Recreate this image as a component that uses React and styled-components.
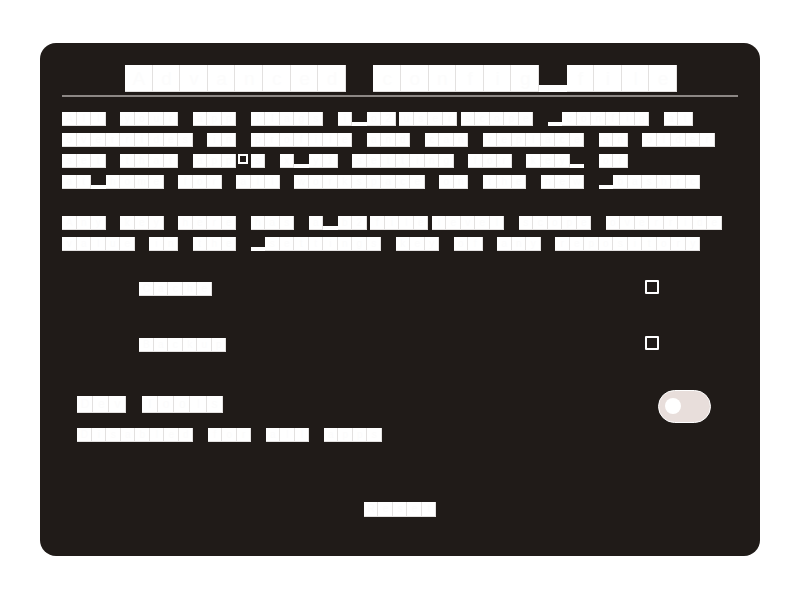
import React from 'react'
import styled, { createGlobalStyle, css } from 'styled-components'

const SIZES = {
  title: { w: 27.6, h: 27 },
  heading: { w: 16.2, h: 17 },
  body: { w: 14.5, h: 14.4 },
}

function Glyphs({ children, size = 'body' }) {
  const s = SIZES[size]
  return (
    <Run $h={s.h}>
      {[...children].map((ch, i) => {
        if (ch === ' ') return <Gap key={i} $w={s.w} $h={s.h}> </Gap>
        if (ch === '-') return <Gap key={i} $w={3.5} $h={s.h}>-</Gap>
        const kind = ch === '_' ? 'low' : ch === "'" ? 'quote' : 'full'
        return (
          <Cell key={i} $w={s.w} $h={s.h} $kind={kind}>
            {ch}
          </Cell>
        )
      })}
    </Run>
  )
}

const intro = [
  'All your app flags i_o2-user-scope _config at',
  'overrides in profile and can replace an older',
  "set that app's x_y1 setting for key_ of",
  'at_home for all workspace on the new _bashrc',
]

const scope = [
  'Any key here has a_b2-file-level scope override',
  'value in the _settings key of any repository',
]

function App() {
  return (
    <>
      <GlobalStyle />
      <Card>
        <Title>
          <Glyphs size="title">Advanced config_file</Glyphs>
        </Title>
        <Rule />

        <Paragraph>
          {intro.map((line) => (
            <Glyphs key={line}>{line}</Glyphs>
          ))}
        </Paragraph>

        <Paragraph $gap={27}>
          {scope.map((line) => (
            <Glyphs key={line}>{line}</Glyphs>
          ))}
        </Paragraph>

        <Options>
          <CheckRow>
            <CheckLabel>
              <Glyphs>Cache</Glyphs>
            </CheckLabel>
            <Checkbox type="checkbox" aria-label="Cache" />
          </CheckRow>
          <CheckRow>
            <CheckLabel>
              <Glyphs>Backup</Glyphs>
            </CheckLabel>
            <Checkbox type="checkbox" aria-label="Backup" />
          </CheckRow>
        </Options>

        <ToggleRow>
          <ToggleText>
            <Glyphs size="heading">Dev Tools</Glyphs>
            <Glyphs>Disabled for all apps</Glyphs>
          </ToggleText>
          <Switch role="switch" aria-checked="false">
            <Knob />
          </Switch>
        </ToggleRow>

        <Footer>
          <ResetButton>
            <Glyphs>Reset</Glyphs>
          </ResetButton>
        </Footer>
      </Card>
    </>
  )
}

export default App

const GlobalStyle = createGlobalStyle`
    body {
        margin: 0;
        background: #ffffff;
        font-family: "Liberation Sans", Arial, sans-serif;
    }
    #root {
        padding: 43px 40px;
    }
`

const Card = styled.div`
    width: 720px;
    box-sizing: border-box;
    background: #201b18;
    border-radius: 16px;
    padding: 22px 22px 39px;
    display: flex;
    flex-direction: column;
`

const Run = styled.div`
    display: flex;
    align-items: flex-start;
    height: ${({ $h }) => $h}px;
`

const Gap = styled.span`
    flex: none;
    display: block;
    width: ${({ $w }) => $w}px;
    height: ${({ $h }) => $h}px;
    overflow: hidden;
    color: transparent;
    font: ${({ $h }) => Math.round($h * 0.7)}px / ${({ $h }) => $h}px "Liberation Sans", Arial, sans-serif;
`

const Cell = styled.span`
    flex: none;
    display: block;
    box-sizing: border-box;
    width: ${({ $w }) => $w}px;
    height: ${({ $h }) => $h}px;
    overflow: hidden;
    text-align: center;
    font: ${({ $h }) => Math.round($h * 0.7)}px / ${({ $h }) => $h}px "Liberation Sans", Arial, sans-serif;
    color: #fcfcfc;
    background: #ffffff;
    box-shadow: inset -1px -1px 0 #e3e1e0;

    ${({ $kind, $h }) =>
      $kind === 'low' &&
      css`
        color: transparent;
        box-shadow: none;
        background: linear-gradient(#fff, #fff) 0 100% / 100% ${Math.round($h * 0.27)}px no-repeat;
      `}

    ${({ $kind }) =>
      $kind === 'quote' &&
      css`
        color: transparent;
        box-shadow: none;
        background:
          linear-gradient(#201b18, #201b18) 4.2px 2px / 6px 6px no-repeat,
          linear-gradient(#fff, #fff) 2.2px 0 / 10px 10px no-repeat;
      `}
`

const Title = styled.h1`
    margin: 0;
    display: flex;
    justify-content: center;
    padding-left: 2px;
`

const Rule = styled.hr`
    margin: 3px 0 0;
    border: none;
    height: 2px;
    background: #8c8784;
`

const Paragraph = styled.p`
    margin: ${({ $gap }) => $gap ?? 15}px 0 0;
    display: flex;
    flex-direction: column;
    gap: 6.5px;
`

const Options = styled.div`
    margin-top: 28.5px;
    display: flex;
    flex-direction: column;
    gap: 39.6px;
`

const CheckRow = styled.label`
    display: flex;
    justify-content: space-between;
    align-items: flex-start;
    padding: 0 79px 0 77px;
`

const CheckLabel = styled.span`
    margin-top: 2px;
`

const Checkbox = styled.input`
    appearance: none;
    margin: 0;
    width: 14px;
    height: 14px;
    box-sizing: border-box;
    border: 2px solid #ffffff;
    border-radius: 1px;
    background: transparent;
`

const ToggleRow = styled.div`
    margin-top: 37.6px;
    display: flex;
    justify-content: space-between;
    align-items: flex-start;
    padding: 0 27px 0 15px;
`

const ToggleText = styled.div`
    margin-top: 6.3px;
    display: flex;
    flex-direction: column;
    gap: 14.4px;
`

const Switch = styled.button`
    width: 53px;
    height: 33px;
    box-sizing: border-box;
    border-radius: 17px;
    border: 1.5px solid #ffffff;
    background: #e8dedb;
    padding: 0 0 0 6px;
    display: flex;
    align-items: center;
    cursor: pointer;
`

const Knob = styled.span`
    width: 16px;
    height: 16px;
    border-radius: 50%;
    background: #ffffff;
`

const Footer = styled.div`
    margin-top: 60.3px;
    display: flex;
    justify-content: center;
`

const ResetButton = styled.button`
    border: none;
    background: transparent;
    padding: 0;
    cursor: pointer;
`
